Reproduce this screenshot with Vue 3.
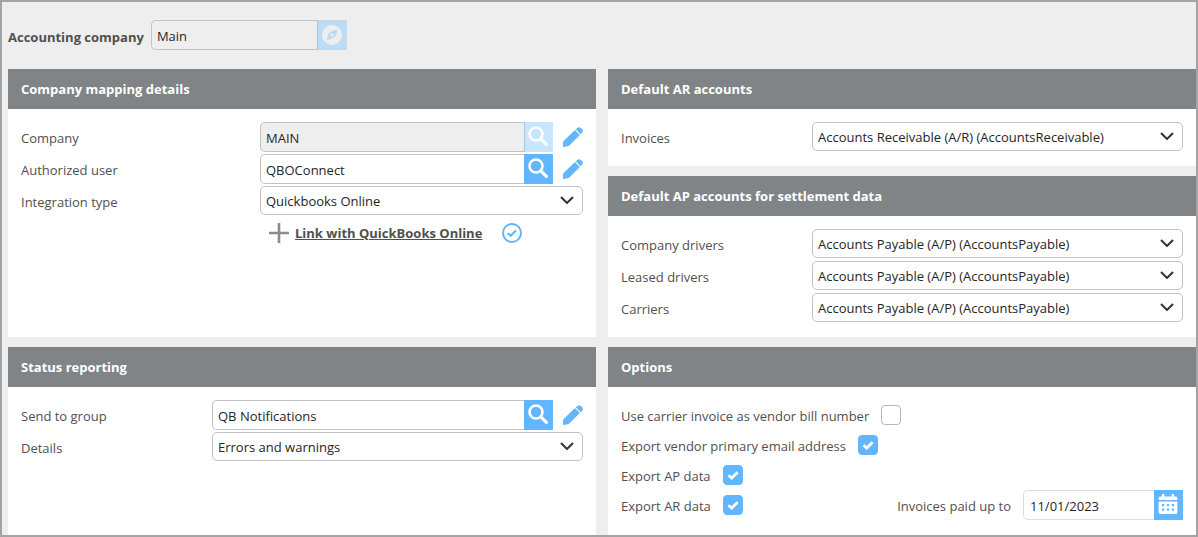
<script setup>
import { reactive } from 'vue'

const form = reactive({
  accountingCompany: 'Main',
  company: 'MAIN',
  user: 'QBOConnect',
  integration: 'Quickbooks Online',
  group: 'QB Notifications',
  details: 'Errors and warnings',
  paidUpTo: '11/01/2023',
})

const receivable = 'Accounts Receivable (A/R) (AccountsReceivable)'
const payable = 'Accounts Payable (A/P) (AccountsPayable)'

const apAccounts = reactive([
  { id: 'company-drivers', label: 'Company drivers', value: payable },
  { id: 'leased-drivers', label: 'Leased drivers', value: payable },
  { id: 'carriers', label: 'Carriers', value: payable },
])

const options = reactive([
  { id: 'carrier-invoice', label: 'Use carrier invoice as vendor bill number', checked: false },
  { id: 'vendor-email', label: 'Export vendor primary email address', checked: true },
  { id: 'export-ap', label: 'Export AP data', checked: true },
  { id: 'export-ar', label: 'Export AR data', checked: true },
])
</script>

<template>
  <svg class="defs" aria-hidden="true">
    <symbol id="i-search" viewBox="0 0 20 20">
      <circle cx="8" cy="8" r="6.5" fill="none" stroke="currentColor" stroke-width="2.6" />
      <path d="M12.8 12.8L18.4 18.4" stroke="currentColor" stroke-width="3.2" stroke-linecap="round" />
    </symbol>
    <symbol id="i-pencil" viewBox="0 0 20 20">
      <path fill="currentColor" d="M12 3.1L16.9 8L6.8 18.1Q5.9 19 4.5 19.2L0.7 20Q-0.1 20.1 0 19.2L0 15.4Q0.4 14 1.4 13.2Z" />
      <path fill="currentColor" d="M12.8 2.3L14.3 0.9Q16 -0.5 18 1L19.1 2.1Q20.6 4 19.1 5.7L17.7 7.2Z" />
    </symbol>
    <symbol id="i-chevron" viewBox="0 0 14 8">
      <path d="M1 1L7 7L13 1" fill="none" stroke="currentColor" stroke-width="2" />
    </symbol>
  </svg>

  <main class="page">
    <header class="topbar">
      <label class="top-label" for="accounting-company">Accounting company</label>
      <div class="combo top-combo">
        <input id="accounting-company" v-model="form.accountingCompany" class="field muted" type="text" readonly />
        <button class="action pale" type="button" aria-label="Browse companies">
          <svg viewBox="0 0 20 20" width="20" height="20">
            <circle cx="10" cy="10" r="10" fill="#eee" />
            <path fill="#bcdcf5" fill-rule="evenodd" d="M15.4 4.6Q15.5 9 13 11.8Q10 14.4 5 15.2Q4.8 10.8 7 8Q10 5.4 15.4 4.6ZM10 8.6A1.4 1.4 0 1 0 10 11.4A1.4 1.4 0 1 0 10 8.6Z" />
          </svg>
        </button>
      </div>
    </header>

    <div class="panels">
      <section class="panel">
        <h2>Company mapping details</h2>
        <div class="body">
          <div class="row wide">
            <label for="company">Company</label>
            <div class="combo">
              <input id="company" v-model="form.company" class="field muted" type="text" readonly />
              <button class="action faded" type="button" disabled aria-label="Find company">
                <svg width="20" height="20"><use href="#i-search" /></svg>
              </button>
              <button class="edit" type="button" aria-label="Edit company">
                <svg width="20" height="20"><use href="#i-pencil" /></svg>
              </button>
            </div>
          </div>
          <div class="row wide">
            <label for="user">Authorized user</label>
            <div class="combo">
              <input id="user" v-model="form.user" class="field" type="text" />
              <button class="action" type="button" aria-label="Find user">
                <svg width="20" height="20"><use href="#i-search" /></svg>
              </button>
              <button class="edit" type="button" aria-label="Edit user">
                <svg width="20" height="20"><use href="#i-pencil" /></svg>
              </button>
            </div>
          </div>
          <div class="row wide">
            <label for="integration">Integration type</label>
            <div class="select">
              <select id="integration" v-model="form.integration">
                <option>Quickbooks Online</option>
              </select>
              <svg class="chevron"><use href="#i-chevron" /></svg>
            </div>
          </div>
          <div class="row wide">
            <div class="connect">
              <svg viewBox="0 0 20 20" width="20" height="20">
                <path d="M10 0V20M0 10H20" stroke="#8c8c8c" stroke-width="2.6" />
              </svg>
              <a href="#">Link with QuickBooks Online</a>
              <svg class="linked" viewBox="0 0 20 20" width="20" height="20" fill="none" stroke="#62b5ff">
                <circle cx="10" cy="10" r="9" stroke-width="2" />
                <path d="M5.8 10.2L8.7 12.8L14 7.4" stroke-width="2.2" />
              </svg>
            </div>
          </div>
        </div>
      </section>

      <div class="stack">
        <section class="panel">
          <h2>Default AR accounts</h2>
          <div class="body">
            <div class="row">
              <label for="invoices">Invoices</label>
              <div class="select">
                <select id="invoices">
                  <option>{{ receivable }}</option>
                </select>
                <svg class="chevron"><use href="#i-chevron" /></svg>
              </div>
            </div>
          </div>
        </section>
        <section class="panel grow">
          <h2>Default AP accounts for settlement data</h2>
          <div class="body">
            <div v-for="account in apAccounts" :key="account.id" class="row">
              <label :for="account.id">{{ account.label }}</label>
              <div class="select">
                <select :id="account.id" v-model="account.value">
                  <option>{{ payable }}</option>
                </select>
                <svg class="chevron"><use href="#i-chevron" /></svg>
              </div>
            </div>
          </div>
        </section>
      </div>

      <section class="panel">
        <h2>Status reporting</h2>
        <div class="body">
          <div class="row">
            <label for="group">Send to group</label>
            <div class="combo">
              <input id="group" v-model="form.group" class="field" type="text" />
              <button class="action" type="button" aria-label="Find group">
                <svg width="20" height="20"><use href="#i-search" /></svg>
              </button>
              <button class="edit" type="button" aria-label="Edit group">
                <svg width="20" height="20"><use href="#i-pencil" /></svg>
              </button>
            </div>
          </div>
          <div class="row">
            <label for="details">Details</label>
            <div class="select">
              <select id="details" v-model="form.details">
                <option>Errors and warnings</option>
              </select>
              <svg class="chevron"><use href="#i-chevron" /></svg>
            </div>
          </div>
        </div>
      </section>

      <section class="panel">
        <h2>Options</h2>
        <div class="body">
          <div v-for="option in options" :key="option.id" class="option">
            <label :for="option.id">{{ option.label }}</label>
            <span class="check">
              <input :id="option.id" v-model="option.checked" type="checkbox" />
              <svg v-if="option.checked" viewBox="0 0 20 20">
                <path d="M5.5 10.2L8.7 13L14.6 7.2" fill="none" stroke="#fff" stroke-width="2.8" />
              </svg>
            </span>
            <div v-if="option.id === 'export-ar'" class="paid">
              <label for="paid-up-to">Invoices paid up to</label>
              <div class="combo date">
                <input id="paid-up-to" v-model="form.paidUpTo" class="field" type="text" />
                <button class="action" type="button" aria-label="Open calendar">
                  <svg viewBox="0 0 20 20" width="20" height="20">
                    <path
                      fill="#fff"
                      fill-rule="evenodd"
                      d="M4 0H6.4V2.4H13.6V0H16V2.4H17.8Q19.4 2.4 19.4 4V6H0.6V4Q0.6 2.4 2.2 2.4H4ZM0.6 7.4H19.4V18Q19.4 20 17.6 20H2.4Q0.6 20 0.6 18ZM4 10V12.2H6.2V10ZM8.9 10V12.2H11.1V10ZM13.8 10V12.2H16V10ZM4 14.6V16.8H6.2V14.6ZM8.9 14.6V16.8H11.1V14.6ZM13.8 14.6V16.8H16V14.6Z"
                    />
                  </svg>
                </button>
              </div>
            </div>
          </div>
        </div>
      </section>
    </div>
  </main>
</template>

<style>
body {
  margin: 0;
}
</style>

<style scoped>
.page,
.page * {
  box-sizing: border-box;
}

.page {
  display: flex;
  flex-direction: column;
  min-height: 100vh;
  padding-left: 6px;
  border: 2px solid #a3a3a3;
  background: #eee;
  color: #505050;
  font-family: "Open Sans", "Noto Sans", sans-serif;
  font-size: 13px;
}

.defs {
  position: absolute;
  width: 0;
  height: 0;
}

svg {
  display: block;
  flex: none;
}

input,
select,
button {
  margin: 0;
  font: inherit;
}

.topbar {
  display: flex;
  gap: 7px;
  padding: 18px 0 19px;
}

.top-label {
  font-weight: 700;
  line-height: 34px;
  height: 30px;
}

.top-combo {
  width: 196px;
}

.panels {
  flex: 1;
  display: grid;
  grid-template-columns: 1fr 1fr;
  grid-template-rows: auto 1fr;
  gap: 10px 12px;
}

.stack {
  display: flex;
  flex-direction: column;
  gap: 10px;
}

.grow {
  flex: 1;
}

.panel {
  background: #fff;
}

h2 {
  margin: 0;
  padding: 0 13px;
  background: #808486;
  color: #fff;
  font-size: 13px;
  font-weight: 700;
  line-height: 40px;
}

.body {
  padding: 13px 13px 12px;
}

.row {
  display: grid;
  grid-template-columns: 191px 1fr;
  align-items: start;
  height: 32px;
  line-height: 32px;
}

.row.wide {
  grid-template-columns: 239px 1fr;
}

.combo {
  display: flex;
  height: 30px;
}

.field {
  flex: 1;
  min-width: 0;
  height: 30px;
  padding: 2px 5px 0;
  border: 1px solid #c3c3c3;
  border-right: 0;
  border-radius: 5px 0 0 5px;
  outline: 0;
  background: #fff;
  color: #252525;
}

.field.muted {
  background: #eee;
}

.date .field {
  padding-left: 6px;
  border-color: #ddd;
}

.action {
  display: grid;
  place-items: center;
  flex: none;
  width: 29px;
  height: 30px;
  padding: 0 1px 2px 0;
  border: 0;
  background: #62b5ff;
  color: #fff;
}

.action.pale {
  width: 30px;
  padding: 0 1px 0 0;
  background: #bcdcf5;
  border-left: 1px solid #a9c6dd;
}

.action.faded {
  padding-right: 2px;
  background: #c7e5ff;
  border-left: 1px solid #a9c6dd;
}

.edit {
  flex: none;
  width: 30px;
  padding: 0 0 0 10px;
  border: 0;
  background: none;
  color: #62b5ff;
}

.edit svg {
  overflow: visible;
}

.select {
  position: relative;
}

select {
  display: block;
  width: 100%;
  height: 29px;
  padding: 0 32px 0 5px;
  border: 1px solid #c3c3c3;
  border-radius: 5px;
  outline: 0;
  appearance: none;
  background: #fff;
  color: #252525;
  line-height: 20px;
}

.chevron {
  position: absolute;
  top: 10px;
  right: 9px;
  width: 14px;
  height: 8px;
  color: #333;
  pointer-events: none;
}

.connect {
  grid-column: 2;
  display: flex;
  align-items: center;
  gap: 6px;
  height: 30px;
  padding-left: 9px;
}

.connect a {
  color: #505050;
  font-weight: 700;
}

.linked {
  margin-left: 14px;
}

.option {
  display: flex;
  align-items: center;
  gap: 12px;
  height: 30px;
  line-height: 20px;
}

.option label {
  padding-top: 2px;
}

.check {
  position: relative;
  width: 20px;
  height: 20px;
}

.check input {
  display: block;
  width: 20px;
  height: 20px;
  border: 1px solid #b5b5b5;
  border-radius: 4px;
  appearance: none;
  background: #fff;
}

.check input:checked {
  border-color: #62b5ff;
  background: #62b5ff;
}

.check svg {
  position: absolute;
  inset: 0;
  pointer-events: none;
}

.paid {
  display: flex;
  align-items: center;
  gap: 12px;
  margin-left: auto;
}

.date {
  width: 160px;
}
</style>
